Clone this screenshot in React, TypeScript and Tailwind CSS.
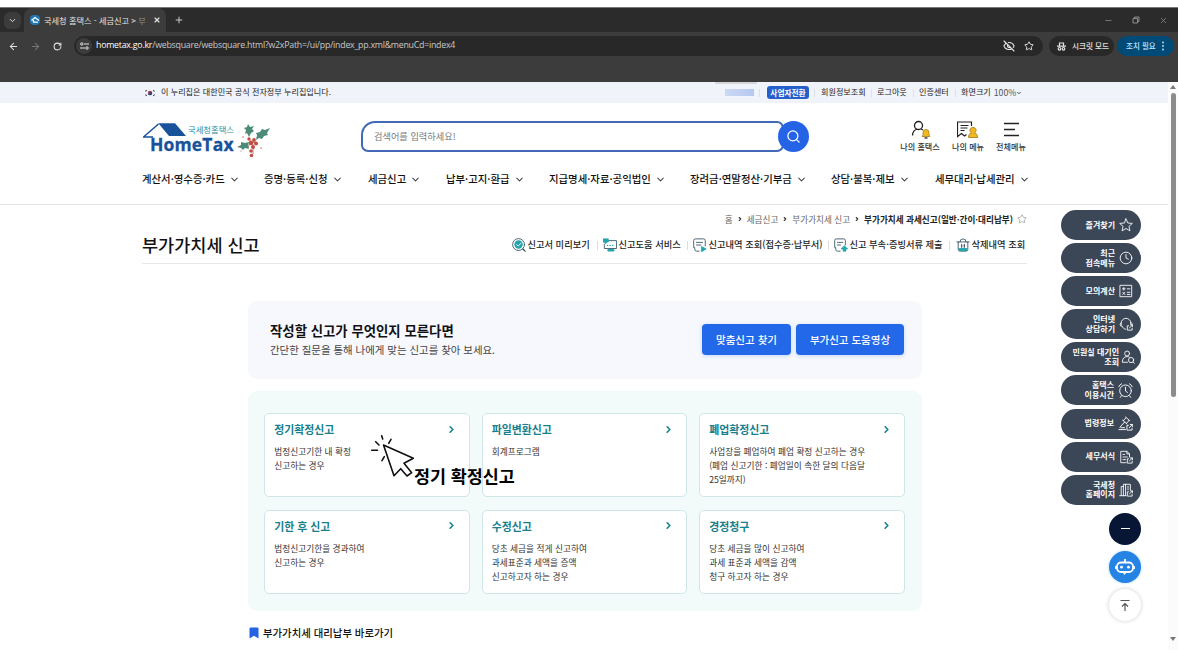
import type { ReactNode } from "react";
import { ChevronDown, ChevronRight, Star, EyeOff, Clock, Search, X, Plus, Minus, ArrowLeft, ArrowRight, RotateCw } from "lucide-react";

const nav = [
  "계산서·영수증·카드",
  "증명·등록·신청",
  "세금신고",
  "납부·고지·환급",
  "지급명세·자료·공익법인",
  "장려금·연말정산·기부금",
  "상담·불복·제보",
  "세무대리·납세관리",
];

const cards = [
  { title: "정기확정신고", lines: ["법정신고기한 내 확정", "신고하는 경우"] },
  { title: "파일변환신고", lines: ["회계프로그램"] },
  { title: "폐업확정신고", lines: ["사업장을 폐업하여 폐업 확정 신고하는 경우", "(폐업 신고기한 : 폐업일이 속한 달의 다음달", "25일까지)"] },
  { title: "기한 후 신고", lines: ["법정신고기한을 경과하여", "신고하는 경우"] },
  { title: "수정신고", lines: ["당초 세금을 적게 신고하여", "과세표준과 세액을 증액", "신고하고자 하는 경우"] },
  { title: "경정청구", lines: ["당초 세금을 많이 신고하여", "과세 표준과 세액을 감액", "청구 하고자 하는 경우"] },
];

function Svg({ size = 14, className = "", children }: { size?: number; className?: string; children: ReactNode }) {
  return (
    <svg
      width={size}
      height={size}
      viewBox="0 0 16 16"
      fill="none"
      stroke="currentColor"
      strokeWidth="1"
      strokeLinecap="round"
      strokeLinejoin="round"
      className={`shrink-0 ${className}`}
    >
      {children}
    </svg>
  );
}

const openBox = <path d="M11 10H9.5v5H15v-2M12 12.5L15.3 9M13 9h2.3v2.3" />;

const quick = [
  { lines: ["즐겨찾기"], icon: <Svg><path d="M8 1l2.1 4.7 5.1.5-3.8 3.4 1.1 5.1L8 12l-4.5 2.7 1.1-5.1L.8 6.2l5.1-.5z" /></Svg> },
  { lines: ["최근", "접속메뉴"], icon: <Clock size={14} strokeWidth={1.5} className="shrink-0" /> },
  { lines: ["모의계산"], icon: <Svg><path d="M1.5 1.5h13v13h-13zM4 5.5h3M5.5 4v3M9.5 5.5h3M4.3 9.5l2.4 2.5M6.7 9.5l-2.4 2.5M9.5 9.5h3M9.5 12h3" /></Svg> },
  { lines: ["인터넷", "상담하기"], icon: <Svg><path d="M2.5 10V7a5.5 5.5 0 0 1 11 0v1M2.5 6.5C.8 6.5.8 10.5 2.5 10.5M13.5 6.5c1.3 0 1.5 1 1.5 2M3.5 10.5c.8 2 2 3 4 3.5" />{openBox}</Svg> },
  { lines: ["민원실 대기인", "조회"], icon: <Svg><circle cx="7" cy="4" r="2.8" /><path d="M7.5 14H1.5c0-4 2-6.5 5.5-6.5 1 0 1.800.2 2.5.6" /><circle cx="11.5" cy="11.5" r="3" /><path d="M13.7 13.7l1.6 1.6" /></Svg> },
  { lines: ["홈택스", "이용시간"], icon: <Svg size={15}><circle cx="8" cy="8.3" r="6.2" /><path d="M8 4.5v4l2 1.5M.8 4a6 6 0 0 1 3-3.2M15.2 4a6 6 0 0 0-3-3.2M3.5 13.7l-1 1.6M12.500 13.700l1 1.600" /></Svg> },
  { lines: ["법령정보"], icon: <Svg size={15}><path d="M8 1l4.5 4M5 4.5l4.500 4M8.5 2l-3 3M12 4.500L9 8M7 6.500L2 12M1 14.500h7M3 12.500h4" />{openBox}</Svg> },
  { lines: ["세무서식"], icon: <Svg><path d="M8 14.5H2v-13h7l3 3V8M9 1.5v3h3M4.5 5h2M4.5 8h5M4.5 11h3" />{openBox}</Svg> },
  { lines: ["국세청", "홈페이지"], icon: <Svg><path d="M.8 14.5H8M2.500 14.500V4H5v10.500M5 4V1.500h8V8M7.500 1.500v13M9.500 4.500h1.500M9.500 7h1.500" />{openBox}</Svg> },
];

function BrowserChrome() {
  return (
    <div className="h-[75px] shrink-0 border-t border-[#777] bg-[#3c3c3c] text-[#e3e3e3]">
      <div className="flex h-6 items-center bg-[#2b2b2b]">
        <div className="ml-1 flex h-[17px] w-[17px] items-center justify-center rounded-md bg-[#3c3c3c]">
          <ChevronDown size={9} strokeWidth={2.5} />
        </div>
        <div className="ml-[3px] flex h-full w-[142px] items-center rounded-t-lg bg-[#3c3c3c] pl-[6px]">
          <div className="flex h-[10px] w-[10px] items-center justify-center rounded-sm bg-[#2277b5]">
            <svg width="9" height="8" viewBox="0 0 18 16" fill="none" stroke="#fff" strokeWidth="2.5"><path d="M1 9l7-6 8 6M5 8v4h9" /></svg>
          </div>
          <span className="ml-[4px] w-[104px] overflow-hidden text-[8.2px] whitespace-nowrap">
            국세청 홈택스 - 세금신고 &gt; <span className="text-[#8b8b8b]">부</span>
          </span>
          <X size={8} strokeWidth={3.5} className="ml-[5px]" />
        </div>
        <Plus size={10} strokeWidth={2} className="ml-[8px]" />
        <div className="mr-[10px] ml-auto flex items-center gap-[19px] text-[#8d8d8d]">
          <Minus size={9} strokeWidth={2} />
          <svg width="8" height="8" viewBox="0 0 8 8" fill="none" stroke="currentColor"><path d="M1 2.500h4.500v4.500H1zM2.500 2.500V1H7v4.500H5.500" /></svg>
          <X size={9} strokeWidth={2} />
        </div>
      </div>
      <div className="flex h-7 items-center">
        <ArrowLeft size={11} strokeWidth={2.2} className="ml-[8px]" />
        <ArrowRight size={11} strokeWidth={2.2} className="ml-[11px] text-[#777]" />
        <RotateCw size={9} strokeWidth={2.8} className="ml-[12px]" />
        <div className="ml-[12px] flex h-5 w-[969px] items-center rounded-full bg-[#282828]">
          <div className="ml-[2px] flex h-4 w-4 items-center justify-center rounded-full bg-[#3c3c3c]">
            <svg width="9" height="8" viewBox="0 0 9 8" fill="none" stroke="currentColor"><path d="M4 2h5M0 6h5" /><circle cx="1.8" cy="2" r="1.2" /><circle cx="7" cy="6" r="1.2" /></svg>
          </div>
          <span className="ml-[4px] font-['Open_Sans',sans-serif] text-[8.8px] tracking-[-0.24px] whitespace-nowrap text-[#c9c9c9]">
            <span className="text-white">hometax.go.kr</span>/websquare/websquare.html?w2xPath=/ui/pp/index_pp.xml&amp;menuCd=index4
          </span>
          <EyeOff size={12} strokeWidth={2.2} className="ml-auto" />
          <Star size={10} strokeWidth={2.3} className="mr-[9px] ml-[9px]" />
        </div>
        <div className="ml-[6px] flex h-5 w-[65px] items-center rounded-full bg-[#282828] pl-[8px]">
          <svg width="9" height="9" viewBox="0 0 9 9" fill="none" stroke="currentColor" strokeWidth="1.2"><path d="M2.500 3.500V1h4v2.500M0 4.200h9" /><circle cx="2.500" cy="6.800" r="1.300" /><circle cx="6.500" cy="6.800" r="1.300" /></svg>
          <span className="ml-[6px] text-[7.6px] font-medium whitespace-nowrap">시크릿 모드</span>
        </div>
        <div className="ml-[3px] flex h-5 w-[57px] items-center rounded-full bg-[#004a77] pl-[9px] text-[#c2e7ff]">
          <span className="text-[7.5px] font-medium whitespace-nowrap">조치 필요</span>
          <svg width="2" height="10" viewBox="0 0 2 10" fill="currentColor" className="ml-[6px]"><circle cx="1" cy="1.5" r=".9" /><circle cx="1" cy="5" r=".9" /><circle cx="1" cy="8.5" r=".9" /></svg>
        </div>
      </div>
    </div>
  );
}

function GovBar() {
  return (
    <div className="flex h-[21px] shrink-0 items-center bg-[#f0f3f9] pl-[145px] text-[8.1px] whitespace-nowrap text-[#222]">
      <svg width="10" height="8" viewBox="0 0 10 8"><circle cx="5" cy="4" r="2.2" fill="#a33b52" /><path d="M2.800 4a2.200 2.200 0 0 0 4.400 0 1.100 1.100 0 0 0-2.200 0 1.100 1.100 0 0 1-2.200 0" fill="#24458c" /><path d="M.5 2.500l1.200-1.500M8.300 1l1.200 1.500M.5 5.500L1.700 7M8.300 7l1.200-1.500" stroke="#444" strokeWidth="1.2" /></svg>
      <span className="ml-[6px] w-[554px]">이 누리집은 대한민국 공식 전자정부 누리집입니다.</span>
      <span className="flex h-full w-[42px] flex-col">
        <span className="h-[2px] bg-[#d5d6da]" />
        <span className="mt-[5px] ml-[10px] h-[7px] w-[29px] bg-gradient-to-r from-[#ccd9f4] to-[#b6c8f0]" />
      </span>
      <span className="ml-[2px] h-2 w-px bg-[#dde1e8]" />
      <span className="ml-[7px] flex h-[13px] w-[42px] items-center justify-center rounded-[3px] bg-[#2560ca] text-[7.7px] font-bold text-white">사업자전환</span>
      <span className="mr-[6px] ml-[5px] h-2 w-px bg-[#dde1e8]" />
      <span className="w-[50px]">회원정보조회</span>
      <span className="mr-[5px] h-2 w-px bg-[#dde1e8]" />
      <span className="w-[36px]">로그아웃</span>
      <span className="mr-[5px] h-2 w-px bg-[#dde1e8]" />
      <span className="w-[36px]">인증센터</span>
      <span className="mr-[5px] h-2 w-px bg-[#dde1e8]" />
      <span>화면크기</span>
      <span className="ml-[3px] text-[8.7px] leading-[8px] text-[#555]">100%</span>
      <ChevronDown size={6} strokeWidth={3} />
    </div>
  );
}

function Logo() {
  return (
    <svg width="130" height="40" viewBox="0 0 130 40" className="shrink-0">
      <path d="M16.3 3.300H33L44 16H27z" fill="#17529b" />
      <path d="M1.500 17L16.500 4M1 17h10" stroke="#17529b" strokeWidth="1.500" fill="none" />
      <text x="46" y="12.500" fontSize="8.300" fill="#2790a5" textLength="46" fontWeight="400">국세청홈택스</text>
      <text x="8" y="31" fontFamily="'Open Sans', sans-serif" fontSize="17.500" fontWeight="700" fill="#17529b" stroke="#17529b" strokeWidth=".3" textLength="83.500">HomeTax</text>
      <g fill="#4b8b78">
        <path d="M107 17l-2-4-2 1 1-4-2-2 3-1 1-3 2 3 4-1-2 3 2 2-3 2z" />
        <path d="M114 20l1-5-1-2 4-1 2-3 3 1 5-2-3 5 1 2-4 1-2 3-3-1z" />
        <path d="M95 27l4-2 0-3 4 1 4-1-1 4 1 3-4-1-2 2-2-2z" />
      </g>
      <path d="M109 20l-3 8M110 22l6 2M111 24v10" stroke="#83533d" strokeWidth=".7" />
      <g fill="#c34b3f">
        <circle cx="107" cy="19" r="1.700" /><circle cx="112" cy="20" r="1.900" /><circle cx="109" cy="23" r="2.200" /><circle cx="114" cy="23.500" r="1.900" />
        <circle cx="111" cy="27" r="2" /><circle cx="109" cy="31" r="1.800" /><circle cx="109.500" cy="35.500" r="1.800" /><circle cx="101" cy="17" r=".7" /><circle cx="119" cy="28" r=".7" /><circle cx="99" cy="31" r=".6" />
      </g>
    </svg>
  );
}

function Header() {
  return (
    <header className="h-[102px] shrink-0 border-b border-[#e2e2e2] pt-[17px] pl-[142px]">
      <div className="flex h-10">
        <Logo />
        <div className="mt-px ml-[89px] flex h-[31px] w-[448px]">
          <div className="flex h-full w-[423px] items-center rounded-[7px] rounded-tl-[14px] border-2 border-[#4169b8] pl-[11px] text-[9.2px] text-[#777]">
            검색어를 입력하세요!
          </div>
          <div className="-ml-[6px] flex h-[31px] w-[31px] shrink-0 items-center justify-center rounded-full bg-[#2563e6] text-white">
            <Search size={15} strokeWidth={2} />
          </div>
        </div>
        <div className="ml-[91px] flex text-[8.1px] font-medium whitespace-nowrap text-[#333]">
          <div className="flex w-10 flex-col items-center">
            <svg width="20" height="19" viewBox="0 0 20 19" fill="none" stroke="#222" strokeWidth="1.300" className="ml-px"><circle cx="7.500" cy="5.500" r="4" /><path d="M1.500 15.500c0-4 2-5.500 4.500-6.500M10 9l2 1" /><path d="M11 16.500c1-1 1-2 1-4a3 3 0 0 1 6 0c0 2 0 3 1 4z" fill="#f0b923" stroke="#a67c14" strokeWidth=".8" /><path d="M13.500 18h3" /></svg>
            <span className="mt-[2px] leading-[12px]">나의 홈택스</span>
          </div>
          <div className="ml-[12px] flex w-8 flex-col items-center">
            <svg width="22" height="19" viewBox="0 0 22 19" fill="none" stroke="#222" strokeWidth="1.200"><path d="M14.500 6V2h-14v14.500l4-3 3 2.500 2-1.500M3.500 5.500h8M3.500 8h7M3.500 10.500h4" /><path d="M11.500 17.500c0-3 1-4 3-4.500-3-2-1.500-5.500 1.500-5.500s4.500 3.500 1.500 5.500c2 .5 3 1.500 3 4.500z" fill="#f0b923" stroke="#9b7510" strokeWidth=".8" /></svg>
            <span className="mt-[2px] leading-[12px]">나의 메뉴</span>
          </div>
          <div className="ml-[12px] flex w-[30px] flex-col items-center">
            <svg width="17" height="19" viewBox="0 0 17 19" stroke="#222" strokeWidth="1.300"><path d="M1 3.500h15M1 9.500h11M1 15.500h15" /></svg>
            <span className="mt-[2px] leading-[12px]">전체메뉴</span>
          </div>
        </div>
      </div>
      <nav className="mt-[10px] grid h-[18px] grid-cols-[122px_104px_78px_103px_141px_141px_104px_96px] text-[10.4px] font-medium whitespace-nowrap text-[#111]">
        {nav.map((n) => (
          <div key={n} className="flex items-center gap-[4px]">
            {n}
            <ChevronDown size={11} strokeWidth={2.2} className="text-[#444]" />
          </div>
        ))}
      </nav>
    </header>
  );
}

const tools = [
  {
    label: "신고서 미리보기",
    icon: <Svg className="text-[#385366]"><circle cx="7.500" cy="7.500" r="6.800" /><circle cx="7.500" cy="7.500" r="4.800" fill="#24a5ad" stroke="none" /><path d="M5.200 7.500L7 9.300l3.300-3.500" stroke="#fff" /><path d="M12.500 12.500l2.500 2.500" strokeWidth="1.600" /></Svg>,
  },
  {
    label: "신고도움 서비스",
    icon: <Svg className="text-[#385366]"><path d="M6 3h9.500v9H1.500V7" /><path d="M0 1h6v3.500H4.500L3 6.500 1.500 4.500H0z" fill="#24a5ad" stroke="#24a5ad" /><path d="M5 8.500h.3M8 8.500h.3M11 8.500h.3" stroke="#24a5ad" strokeWidth="1.500" /><path d="M6.500 14h5" stroke="#24a5ad" strokeWidth="3" /></Svg>,
  },
  {
    label: "신고내역 조회(접수증·납부서)",
    icon: <Svg className="text-[#385366]"><path d="M7 15H4a2 2 0 0 1-2-2v-2H.8V3A2 2 0 0 1 3 1h9a2 2 0 0 1 2 2v6M4 5h7M4 8h5" /><path d="M10 10l5 2.500-5 3z" fill="#24a5ad" stroke="#24a5ad" /></Svg>,
  },
  {
    label: "신고 부속·증빙서류 제출",
    icon: <Svg className="text-[#385366]"><path d="M7 15H4a2 2 0 0 1-2-2v-2H.8V3A2 2 0 0 1 3 1h8a2 2 0 0 1 2 2v5M4 5h6M4 8h3.500" /><path d="M12 9l3.500 3.500h-2V15h-3v-2.500h-2z" fill="#24a5ad" stroke="#24a5ad" /></Svg>,
  },
  {
    label: "삭제내역 조회",
    icon: <Svg className="text-[#385366]"><path d="M1 4.500h14M4.500 4.500a3.500 3.500 0 0 1 7 0M2.500 4.500v8.500a2 2 0 0 0 2 2h7a2 2 0 0 0 2-2V4.500" /><path d="M3.500 12h9v1.500q0 1-1 1h-7q-1 0-1-1z" fill="#24a5ad" stroke="#24a5ad" /><path d="M6.500 7.500v3M9.500 7.500v3" strokeWidth="1.400" /></Svg>,
  },
];

function TitleArea() {
  return (
    <div className="ml-[142px] flex h-[59px] w-[885px] shrink-0 flex-col border-b border-[#e8e8e8] whitespace-nowrap">
      <div className="mt-[6px] flex h-4 items-center justify-end text-[8.6px] text-[#666]">
        <span>홈</span>
        <ChevronRight size={6} strokeWidth={4.5} className="mx-[4px] text-[#333]" />
        <span>세금신고</span>
        <ChevronRight size={6} strokeWidth={4.5} className="mx-[4px] text-[#333]" />
        <span>부가가치세 신고</span>
        <ChevronRight size={6} strokeWidth={4.5} className="mx-[4px] text-[#333]" />
        <span className="font-bold text-[#222]">부가가치세 과세신고(일반·간이·대리납부)</span>
        <Star size={10} strokeWidth={1.5} className="ml-[4px] text-[#888]" />
      </div>
      <div className="mt-[5px] flex h-[26px] items-center">
        <h1 className="w-[370px] text-[17.5px] font-medium text-[#111]">부가가치세 신고</h1>
        <div className="grid grid-cols-[85px_6px_84px_6px_135px_6px_115px_7px_70px] items-center text-[9.25px] font-medium text-[#222]">
          {tools.map((t, i) => (
            <div key={t.label} className="contents">
              {i > 0 && <span className="h-[9px] w-px bg-[#ddd]" />}
              <span className="flex items-center gap-[1.5px]">
                {t.icon}
                {t.label}
              </span>
            </div>
          ))}
        </div>
      </div>
    </div>
  );
}

function QuickMenu() {
  return (
    <aside className="absolute top-[210px] left-[1061px] flex w-20 flex-col items-end gap-[3.1px]">
      {quick.map((q, i) => (
        <div
          key={q.lines[0]}
          className={`flex h-[30px] w-20 items-center justify-end rounded-full bg-[#3b4657] text-white ${i === 4 ? "gap-[2px] pr-[6px]" : "gap-[4px] pr-[8px]"}`}
        >
          <div className="-mt-px text-right text-[8px] leading-[9.5px] font-bold whitespace-nowrap">
            {q.lines.map((l) => (
              <div key={l}>{l}</div>
            ))}
          </div>
          {q.icon}
        </div>
      ))}
      <div className="mt-[5px] flex h-8 w-8 items-center justify-center rounded-full bg-[#061634]">
        <span className="h-px w-[9px] bg-white" />
      </div>
      <div className="mt-[3px] flex h-8 w-8 items-center justify-center rounded-full bg-[#2583e4] shadow-[0_0_3px_#a9daff]">
        <svg width="20" height="18" viewBox="0 0 20 18" fill="none" stroke="#fff" strokeWidth="1.8"><path d="M10 4V1" /><rect x="2" y="4.5" width="16" height="9.5" rx="4" /><path d="M1 8v3M19 8v3" /><circle cx="6.5" cy="9.2" r="1.4" fill="#fff" stroke="none" /><circle cx="13.5" cy="9.2" r="1.4" fill="#fff" stroke="none" /><path d="M8 15l1.5 2 1.5-2z" fill="#fff" stroke="none" /></svg>
      </div>
      <div className="mt-[3px] flex h-8 w-8 items-center justify-center rounded-full bg-white shadow-[0_0_4px_#ccc]">
        <svg width="10" height="13" viewBox="0 0 10 13" fill="none" stroke="#555" strokeWidth="1.2"><path d="M.5 1.500h9M5 12V4.500M2 7.500l3-3 3 3" /></svg>
      </div>
    </aside>
  );
}

export default function App() {
  return (
    <div
      lang="ko"
      className="relative flex h-[650px] w-[1178px] flex-col overflow-hidden bg-white pt-[7px] font-['Noto_Sans_CJK_KR',sans-serif]"
    >
      <BrowserChrome />
      <div className="flex flex-1">
        <main className="flex w-[1168px] flex-col">
          <GovBar />
          <Header />
          <TitleArea />
          <section className="mt-[37px] ml-[248px] flex h-[78px] w-[674px] shrink-0 items-center rounded-[9px] bg-[#f7f8fe] pr-[18px] pb-px pl-[22px]">
            <div className="whitespace-nowrap">
              <h2 className="text-[13.4px] leading-[19px] font-bold text-[#111]">작성할 신고가 무엇인지 모른다면</h2>
              <p className="text-[10.45px] leading-[19px] text-[#444]">간단한 질문을 통해 나에게 맞는 신고를 찾아 보세요.</p>
            </div>
            <div className="ml-auto flex gap-[5px] text-[10.5px] font-medium text-white">
              <button className="h-[31px] w-[89px] rounded-[4px] bg-[#2468ea] shadow-[0_1px_4px_#c5d5f7]">맞춤신고 찾기</button>
              <button className="h-[31px] w-[108px] rounded-[4px] bg-[#2468ea] shadow-[0_1px_4px_#c5d5f7]">부가신고 도움영상</button>
            </div>
          </section>
          <section className="mt-[12px] ml-[248px] grid h-[220px] w-[674px] shrink-0 grid-cols-[205.4px_205.4px_205.4px] grid-rows-[84px_84px] gap-x-[12.1px] gap-y-[12.4px] rounded-[9px] bg-[#f2fbfa] pt-[22.3px] pl-[16.2px]">
            {cards.map((c) => (
              <div key={c.title} className="rounded-[5px] border border-[#cfe6e8] bg-white pt-[6px] pr-[12px] pl-[9px] whitespace-nowrap">
                <div className="flex h-[18px] items-center justify-between text-[#17808c]">
                  <h3 className="text-[10.9px] font-bold">{c.title}</h3>
                  <ChevronRight size={11} strokeWidth={3.5} />
                </div>
                <div className="mt-[7px] text-[8.7px] leading-[14px] text-[#333]">
                  {c.lines.map((l) => (
                    <p key={l}>{l}</p>
                  ))}
                </div>
              </div>
            ))}
          </section>
          <div className="mt-[13px] ml-[249px] flex h-[18px] items-center gap-[4px] text-[10.4px] font-medium text-[#111]">
            <svg width="10" height="12" viewBox="0 0 10 12"><path d="M.5 1.500a1 1 0 0 1 1-1h7a1 1 0 0 1 1 1v10L5 8.700l-4.500 2.800z" fill="#2563e6" /></svg>
            부가가치세 대리납부 바로가기
          </div>
        </main>
        <div className="flex w-[10px] flex-col items-center bg-[#fbfbfb]">
          <svg width="6" height="4" viewBox="0 0 6 4" className="mt-[3px]"><path d="M0 4l3-4 3 4z" fill="#777" /></svg>
          <div className="mt-[4px] h-[304px] w-[5px] rounded-full bg-[#8b8b8b]" />
          <svg width="6" height="4" viewBox="0 0 6 4" className="mt-auto mb-[9px]"><path d="M0 0l3 4 3-4z" fill="#777" /></svg>
        </div>
      </div>

      <QuickMenu />

      {/* click pointer with its caption */}
      <svg className="absolute top-[434px] left-[370px]" width="46" height="44" viewBox="0 0 46 44" fill="none" stroke="#111" strokeWidth="1.600" strokeLinecap="round" strokeLinejoin="round">
        <path d="M13.500 11l29.800 13.300-9.300 5 7.700 9.400-4.700 3.300-6.300-7.300-6.700 7z" fill="#fff" />
        <path d="M12.700 5l-1-3.300M9 11L5.700 7.700M7.500 16.300H1.700M14.300 22.700l-2.300 4M18.700 9.300L21 5.300" />
      </svg>
      <span className="absolute top-[463px] left-[414px] text-[17.4px] leading-[26px] font-bold whitespace-nowrap text-black">정기 확정신고</span>
    </div>
  );
}
